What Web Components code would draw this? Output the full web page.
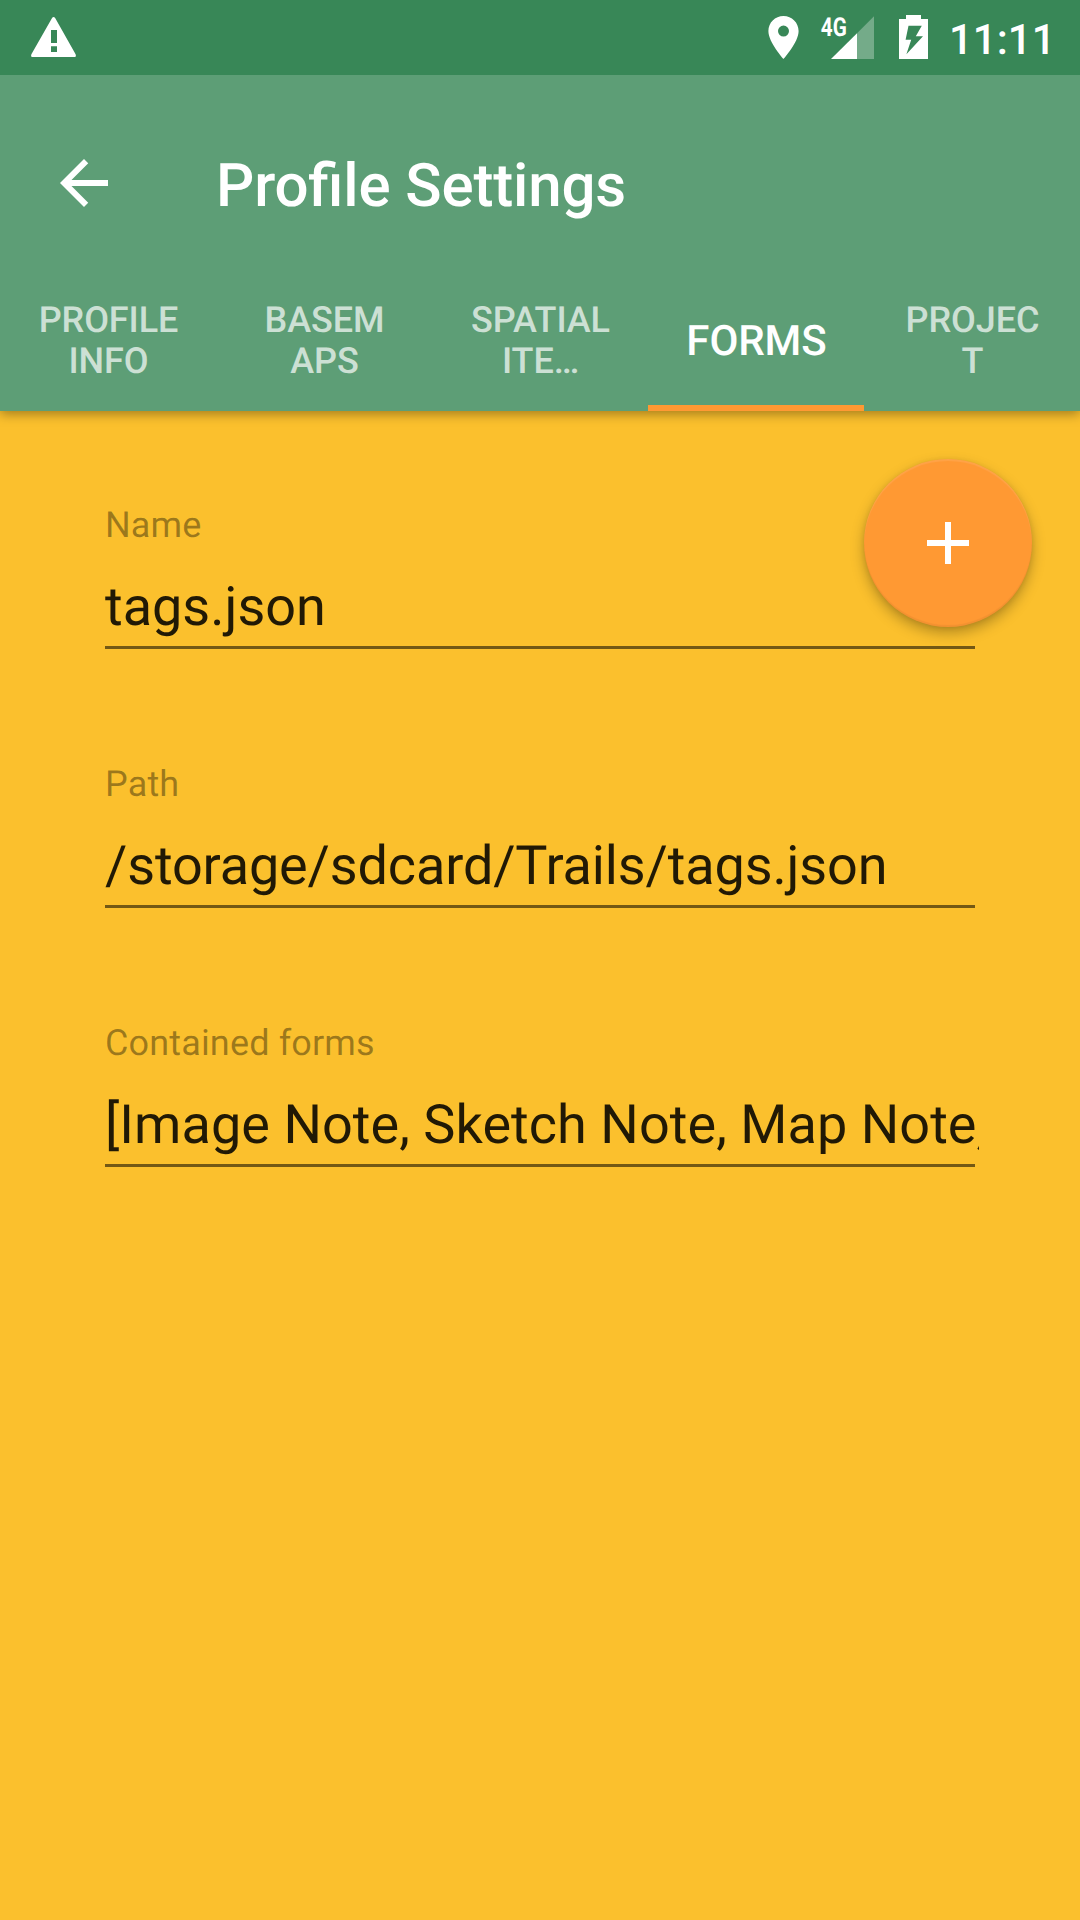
<!DOCTYPE html>
<html lang="en">
<head>
<meta charset="utf-8">
<title>Profile Settings</title>
<style>
  html, body { margin: 0; height: 100%; }
  body { font-family: Roboto, "Noto Sans", sans-serif; background: #fbc02d; overflow: hidden; text-rendering: geometricPrecision; }
</style>
</head>
<body>
<settings-screen>
  <status-bar slot="status" time="11:11" network="4G"></status-bar>
  <app-header slot="header" heading="Profile Settings">
    <app-tab>PROFILE<br>INFO</app-tab>
    <app-tab>BASEM<br>APS</app-tab>
    <app-tab>SPATIAL<br>ITE…</app-tab>
    <app-tab selected>FORMS</app-tab>
    <app-tab>PROJEC<br>T</app-tab>
  </app-header>
  <text-field label="Name">tags.json</text-field>
  <text-field label="Path" style="--tracking: -.13px">/storage/sdcard/Trails/tags.json</text-field>
  <text-field label="Contained forms" style="--tracking: .05px">[Image Note, Sketch Note, Map Note, </text-field>
  <add-button slot="fab"></add-button>
</settings-screen>

<script>
  const define = (name, html, setup) => {
    const template = document.createElement('template');
    template.innerHTML = html;
    customElements.define(name, class extends HTMLElement {
      connectedCallback() {
        if (this.shadowRoot) return;
        const root = this.attachShadow({ mode: 'open' });
        root.append(template.content.cloneNode(true));
        if (setup) setup(this, root);
      }
    });
  };

  define('settings-screen', `
    <style>
      :host { display: flex; flex-direction: column; position: relative; width: 1080px; height: 1920px; background: #fbc02d; overflow: hidden; }
      main { display: flex; flex-direction: column; flex: 1; padding: 93px 101px 0 105px; }
    </style>
    <slot name="status"></slot>
    <slot name="header"></slot>
    <main><slot></slot></main>
    <slot name="fab"></slot>
  `);

  define('status-bar', `
    <style>
      :host { display: flex; align-items: center; justify-content: space-between; height: 75px; flex: none; background: #388757; color: #fff; }
      svg { display: block; height: 75px; }
      .right { display: flex; align-items: center; }
      .net { font: 700 26px Roboto, sans-serif; }
      .time { width: 131px; margin-left: -1px; font-size: 42px; font-weight: 500; line-height: 71px; padding-top: 6px; white-space: nowrap; }
    </style>
    <svg width="110" viewBox="0 0 110 75" fill="#fff">
      <path fill-rule="evenodd" d="M52.2 17.8Q53.6 16 55 17.8L75.6 54.2Q76.6 57 74.4 57H32.6Q30.4 57 31.4 54.2ZM51 30V43H57V30ZM51 46.3V52H57V46.3Z"/>
    </svg>
    <div class="right">
      <svg width="190" viewBox="760 0 190 75" fill="#fff">
        <path fill-rule="evenodd" d="M783.5 16C775 16 768.4 22.7 768.4 31C768.4 42.3 783.5 59 783.5 59S798.6 42.3 798.6 31C798.6 22.7 791.9 16 783.5 16ZM783.5 36.6a5.5 5.5 0 1 1 0-11a5.5 5.5 0 1 1 0 11Z"/>
        <text class="net" x="820.8" y="35.6" textLength="26" lengthAdjust="spacingAndGlyphs"></text>
        <path fill-opacity=".3" d="M857 33.3L874 16.3V59H857Z"/>
        <path d="M831 59L857 33.3V59Z"/>
        <path fill-rule="evenodd" d="M899 19H906V15H921V19H928V59H899ZM908.5 25.7L905.6 39.7H911.2L906.4 54.2L923 36.3H915.8L921.8 25.7Z"/>
      </svg>
      <div class="time"></div>
    </div>
  `, (el, root) => {
    root.querySelector('.net').textContent = el.getAttribute('network');
    root.querySelector('.time').textContent = el.getAttribute('time');
  });

  define('app-header', `
    <style>
      :host { display: flex; flex-direction: column; flex: none; height: 336px; background: #5d9e76; color: #fff; box-shadow: 0 3px 11px rgba(0,0,0,.36); clip-path: inset(0 0 -30px 0); }
      .bar { display: flex; align-items: center; gap: 96px; height: 192px; padding: 24px 48px 0; box-sizing: border-box; }
      svg { display: block; }
      h1 { margin: 6px 0 0; font-size: 60px; font-weight: 500; line-height: 70px; letter-spacing: -.14px; font-feature-settings: "liga" 1; white-space: nowrap; }
      nav { display: flex; flex: 1; }
    </style>
    <div class="bar">
      <svg width="72" height="72" viewBox="0 0 24 24" fill="#fff"><path d="M20 11H7.83l5.59-5.59L12 4l-8 8 8 8 1.41-1.41L7.83 13H20v-2z"/></svg>
      <h1></h1>
    </div>
    <nav><slot></slot></nav>
  `, (el, root) => {
    root.querySelector('h1').textContent = el.getAttribute('heading');
  });

  define('app-tab', `
    <style>
      :host { display: flex; flex: 1; align-items: center; justify-content: center; box-sizing: border-box; padding: 10px 0 0 1px; text-align: center; font-size: 36px; font-weight: 500; line-height: 41px; letter-spacing: -.08px; color: rgba(255,255,255,.7); border-bottom: 6px solid transparent; }
      :host([selected]) { color: #fff; font-size: 42px; border-bottom-color: #ff9933; }
    </style>
    <span><slot></slot></span>
  `);

  define('text-field', `
    <style>
      :host { display: flex; flex-direction: column; height: 259px; }
      label { font-size: 36px; line-height: 42px; letter-spacing: .15px; color: rgba(0,0,0,.38); }
      .value { font-size: 54px; line-height: 64px; margin-top: 30px; letter-spacing: var(--tracking, normal); color: rgba(0,0,0,.87); white-space: pre; overflow: hidden; }
      .line { height: 3px; margin: 6px 4px 0 0; background: rgba(0,0,0,.54); }
    </style>
    <label></label>
    <div class="value"><slot></slot></div>
    <div class="line"></div>
  `, (el, root) => {
    root.querySelector('label').textContent = el.getAttribute('label');
  });

  define('add-button', `
    <style>
      :host { position: absolute; top: 459px; right: 48px; width: 168px; height: 168px; border-radius: 50%; background: #ff9933; display: flex; align-items: center; justify-content: center;
        box-shadow: 0 6px 14px rgba(0,0,0,.28), 0 1px 5px rgba(0,0,0,.08), inset 0 2px 1px rgba(255,255,255,.1), inset 0 -2px 1px rgba(0,0,0,.05); }
    </style>
    <svg width="72" height="72" viewBox="0 0 24 24" fill="#fff"><path d="M19 13h-6v6h-2v-6H5v-2h6V5h2v6h6v2z"/></svg>
  `);
</script>
</body>
</html>
